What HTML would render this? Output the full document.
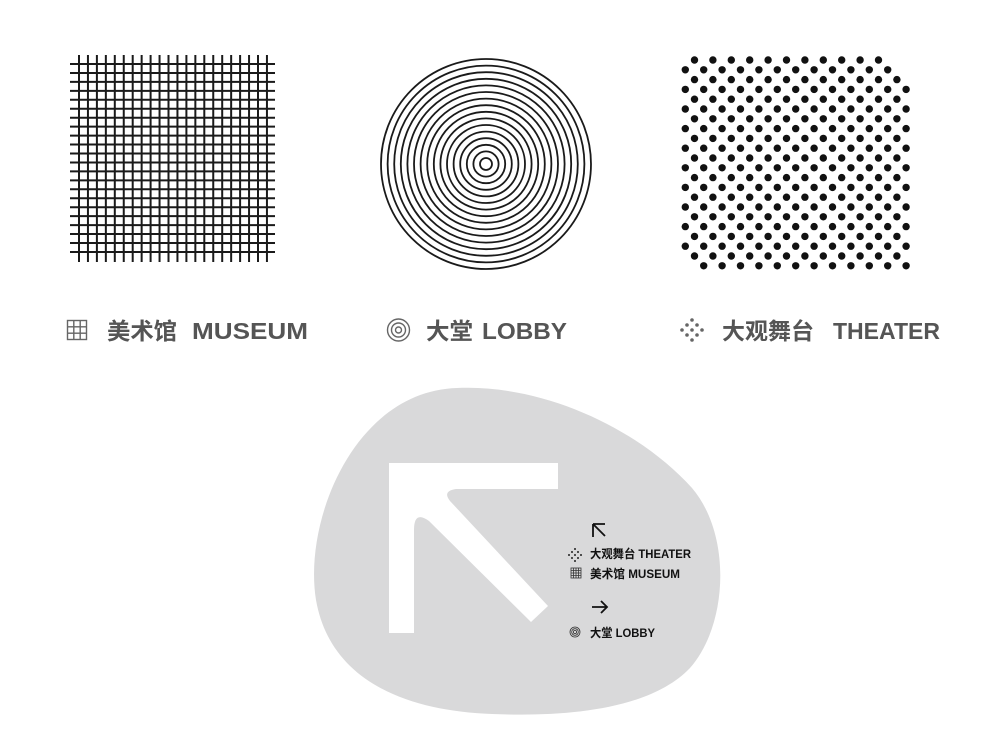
<!DOCTYPE html>
<html><head><meta charset="utf-8">
<style>
html,body{margin:0;padding:0;background:#fff;width:1000px;height:750px;overflow:hidden}
svg{position:absolute;left:0;top:0}
.lbl{font-family:"Liberation Sans","Noto Sans CJK SC",sans-serif;font-weight:bold;fill:#555;font-size:23px}
.sm{font-family:"Liberation Sans","Noto Sans CJK SC",sans-serif;font-weight:bold;fill:#111;font-size:12px}
</style></head><body>
<svg id="s" width="1000" height="750" viewBox="0 0 1000 750">
<g id="grid" stroke="#1a1a1a" stroke-width="2"></g>
<g id="rings" fill="none" stroke="#1a1a1a" stroke-width="1.8"></g>
<g id="dots" fill="#111"></g>

<g stroke="#666" stroke-width="1.4" fill="none">
<rect x="67.5" y="320.5" width="19" height="19"/>
<path d="M73.8 320.5V339.5M80.2 320.5V339.5M67.5 326.8H86.5M67.5 333.2H86.5"/>
<circle cx="398.5" cy="330" r="11"/><circle cx="398.5" cy="330" r="7"/><circle cx="398.5" cy="330" r="3"/>
</g>
<g fill="#666">
<circle cx="692" cy="320" r="1.8"/><circle cx="687" cy="325" r="1.8"/><circle cx="697" cy="325" r="1.8"/>
<circle cx="682" cy="330" r="1.8"/><circle cx="692" cy="330" r="1.8"/><circle cx="702" cy="330" r="1.8"/>
<circle cx="687" cy="335" r="1.8"/><circle cx="697" cy="335" r="1.8"/><circle cx="692" cy="340" r="1.8"/>
</g>
<text class="lbl" x="107" y="339" textLength="70" lengthAdjust="spacingAndGlyphs">美术馆</text>
<text class="lbl" x="192" y="339" textLength="116" lengthAdjust="spacingAndGlyphs">MUSEUM</text>
<text class="lbl" x="426" y="339" textLength="47" lengthAdjust="spacingAndGlyphs">大堂</text>
<text class="lbl" x="482" y="339" textLength="85" lengthAdjust="spacingAndGlyphs">LOBBY</text>
<text class="lbl" x="722" y="339" textLength="92" lengthAdjust="spacingAndGlyphs">大观舞台</text>
<text class="lbl" x="833" y="339" textLength="107" lengthAdjust="spacingAndGlyphs">THEATER</text>

<path fill="#d9d9da" d="M457,388 C545,384 640,430 692,488 C732,535 728,625 690,668 C650,710 565,717 492,714 C405,711 330,680 316,600 C303,520 355,391 457,388 Z"/>
<path fill="#fff" d="M389,463 H558 V489 H456 Q442,491 450,501 L548,606 L531,622 L429,521 Q414,510 414,530 V633 H389 Z"/>

<g stroke="#111" stroke-width="1.8" fill="none">
<path d="M593 524V537M593 524H605M593 524L605 536"/>
<path d="M592 607H607M601 601L607 607L601 613"/>
</g>
<g fill="#222">
<circle cx="575" cy="549" r="1"/><circle cx="572" cy="552" r="1"/><circle cx="578" cy="552" r="1"/>
<circle cx="569" cy="555" r="1"/><circle cx="575" cy="555" r="1"/><circle cx="581" cy="555" r="1"/>
<circle cx="572" cy="558" r="1"/><circle cx="578" cy="558" r="1"/><circle cx="575" cy="561" r="1"/>
</g>
<g stroke="#333" stroke-width="0.8" fill="none">
<rect x="571" y="568" width="10" height="10"/>
<path d="M573.5 568V578M576 568V578M578.5 568V578M571 570.5H581M571 573H581M571 575.5H581"/>
<circle cx="575" cy="632" r="5"/><circle cx="575" cy="632" r="3.3"/><circle cx="575" cy="632" r="1.6"/>
</g>
<text class="sm" x="590" y="558" textLength="101" lengthAdjust="spacingAndGlyphs">大观舞台 THEATER</text>
<text class="sm" x="590" y="578" textLength="90" lengthAdjust="spacingAndGlyphs">美术馆 MUSEUM</text>
<text class="sm" x="590" y="637" textLength="65" lengthAdjust="spacingAndGlyphs">大堂 LOBBY</text>
</svg>
<script>
var NS="http://www.w3.org/2000/svg";
function el(p,t,a){var e=document.createElementNS(NS,t);for(var k in a)e.setAttribute(k,a[k]);p.appendChild(e);}
var g=document.getElementById("grid");
for(var i=0;i<22;i++){var v=79+i*8.95;
el(g,"line",{x1:v,y1:55,x2:v,y2:262});
el(g,"line",{x1:70,y1:64+i*8.95,x2:275,y2:64+i*8.95});}
var r=document.getElementById("rings");
for(var k=0;k<16;k++)el(r,"circle",{cx:486,cy:164,r:6+k*6.6});
var d=document.getElementById("dots");
for(var i=0;i<22;i++){var y=60+i*9.8;var x0=(i%2==0)?694.5:685.3;
for(var x=x0;x<915;x+=18.4){
if(x>883+(y-60)*0.97+1)continue;
if(x<703-(266-y)*0.93-1)continue;
el(d,"circle",{cx:x,cy:y,r:3.7});}}
</script>
</body></html>
